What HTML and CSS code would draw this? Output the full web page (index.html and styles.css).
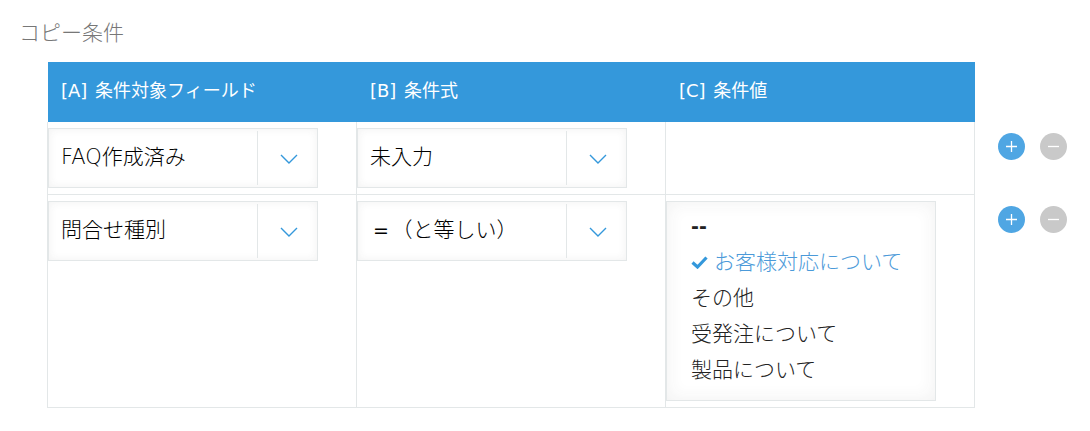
FILE: index.html
```html
<!DOCTYPE html>
<html lang="ja">
<head>
<meta charset="utf-8">
<title>コピー条件</title>
<link rel="stylesheet" href="styles.css">
</head>
<body>
<h2 class="title">コピー条件</h2>
<div class="wrap">
  <div class="table">
    <div class="head">
      <div class="th">[A] 条件対象フィールド</div>
      <div class="th">[B] 条件式</div>
      <div class="th">[C] 条件値</div>
    </div>
    <div class="row row-one">
      <div class="cell"><div class="select"><span class="value">FAQ作成済み</span><span class="arrow"><svg width="20" height="12" viewBox="0 0 20 12"><path d="M2 2l8 8 8-8" fill="none" stroke="#3498db" stroke-width="1.4"/></svg></span></div></div>
      <div class="cell"><div class="select"><span class="value">未入力</span><span class="arrow"><svg width="20" height="12" viewBox="0 0 20 12"><path d="M2 2l8 8 8-8" fill="none" stroke="#3498db" stroke-width="1.4"/></svg></span></div></div>
      <div class="cell"></div>
    </div>
    <div class="row row-two">
      <div class="cell"><div class="select"><span class="value">問合せ種別</span><span class="arrow"><svg width="20" height="12" viewBox="0 0 20 12"><path d="M2 2l8 8 8-8" fill="none" stroke="#3498db" stroke-width="1.4"/></svg></span></div></div>
      <div class="cell"><div class="select"><span class="value"><b class="symbol">=</b> （と等しい）</span><span class="arrow"><svg width="20" height="12" viewBox="0 0 20 12"><path d="M2 2l8 8 8-8" fill="none" stroke="#3498db" stroke-width="1.4"/></svg></span></div></div>
      <div class="cell">
        <ul class="multi">
          <li class="dashes">--</li>
          <li class="selected"><svg class="check" width="17" height="14" viewBox="0 0 17 14"><path d="M1.5 7.5l5 4.5L15.5 2.5" fill="none" stroke="#3498db" stroke-width="3.2"/></svg>お客様対応について</li>
          <li>その他</li>
          <li>受発注について</li>
          <li>製品について</li>
        </ul>
      </div>
    </div>
  </div>
  <div class="actions">
    <div class="btn-row">
      <span class="btn add"><svg width="13" height="13" viewBox="0 0 13 13"><path d="M6.5 1v11M1 6.5h11" stroke="#fff" stroke-width="1.3"/></svg></span>
      <span class="btn remove"><svg width="13" height="13" viewBox="0 0 13 13"><path d="M1 6.5h11" stroke="#fff" stroke-width="1.3"/></svg></span>
    </div>
    <div class="btn-row">
      <span class="btn add"><svg width="13" height="13" viewBox="0 0 13 13"><path d="M6.5 1v11M1 6.5h11" stroke="#fff" stroke-width="1.3"/></svg></span>
      <span class="btn remove"><svg width="13" height="13" viewBox="0 0 13 13"><path d="M1 6.5h11" stroke="#fff" stroke-width="1.3"/></svg></span>
    </div>
  </div>
</div>
</body>
</html>
```
FILE: styles.css
```css
* { box-sizing: border-box; }
html, body { margin: 0; padding: 0; }
body {
  width: 1090px;
  height: 431px;
  overflow: hidden;
  background: #fff;
  font-family: "DejaVu Sans", "Noto Sans CJK JP", sans-serif;
  color: #333;
}
.title {
  margin: 0;
  padding: 18px 0 0 19px;
  height: 62px;
  font-size: 21px;
  line-height: 30px;
  font-weight: 300;
  color: #777;
}
.wrap { display: flex; padding-left: 47px; }
.table { width: 928px; }
.head {
  display: grid;
  grid-template-columns: 309px 309px 309px;
  margin-left: 1px;
  height: 60px;
  background: #3498db;
}
.th {
  padding-left: 13px;
  font-size: 18px;
  line-height: 58px;
  color: #fff;
  font-weight: 400;
  word-spacing: 2px;
}
.row {
  display: grid;
  grid-template-columns: 309px 309px 310px;
  border-bottom: 1px solid #e3e7e8;
}
.row-one { height: 73px; }
.row-two { height: 213px; }
.cell {
  border-left: 1px solid #e3e7e8;
  padding-top: 6px;
}
.cell:last-child { border-right: 1px solid #e3e7e8; }
.select {
  display: flex;
  width: 270px;
  height: 60px;
  border: 1px solid #e3e7e8;
  background: #fff;
  box-shadow: inset 0 0 8px rgba(55, 58, 60, 0.07);
}
.value {
  flex: 1;
  padding-left: 12px;
  font-size: 21px;
  line-height: 56px;
  color: #000;
  font-weight: 300;
  white-space: nowrap;
  word-spacing: -4px;
}
.symbol { margin-left: 3px; font-size: 19px; }
.arrow {
  width: 60px;
  margin: 2px 0;
  border-left: 1px solid #e3e7e8;
  display: flex;
  align-items: center;
  justify-content: center;
  padding: 2px 0 0 3px;
}
.multi {
  list-style: none;
  margin: 0;
  padding: 6px 0 0 24px;
  width: 270px;
  height: 200px;
  border: 1px solid #e3e7e8;
  background: #fff;
  box-shadow: inset 0 0 18px rgba(55, 58, 60, 0.07);
  font-size: 21px;
  line-height: 36px;
  font-weight: 300;
  color: #222;
}
.multi li { white-space: nowrap; }
.dashes { font-weight: 700; font-size: 19px; }
.selected { color: #4b9ad9; display: flex; align-items: center; }
.check { margin-right: 6px; }
.actions { padding: 71px 0 0 23px; }
.btn-row { display: flex; gap: 15px; height: 73px; }
.btn {
  width: 27px;
  height: 27px;
  border-radius: 50%;
  display: flex;
  align-items: center;
  justify-content: center;
}
.add { background: #4fa6e3; }
.remove { background: #c9c9c9; }
```
